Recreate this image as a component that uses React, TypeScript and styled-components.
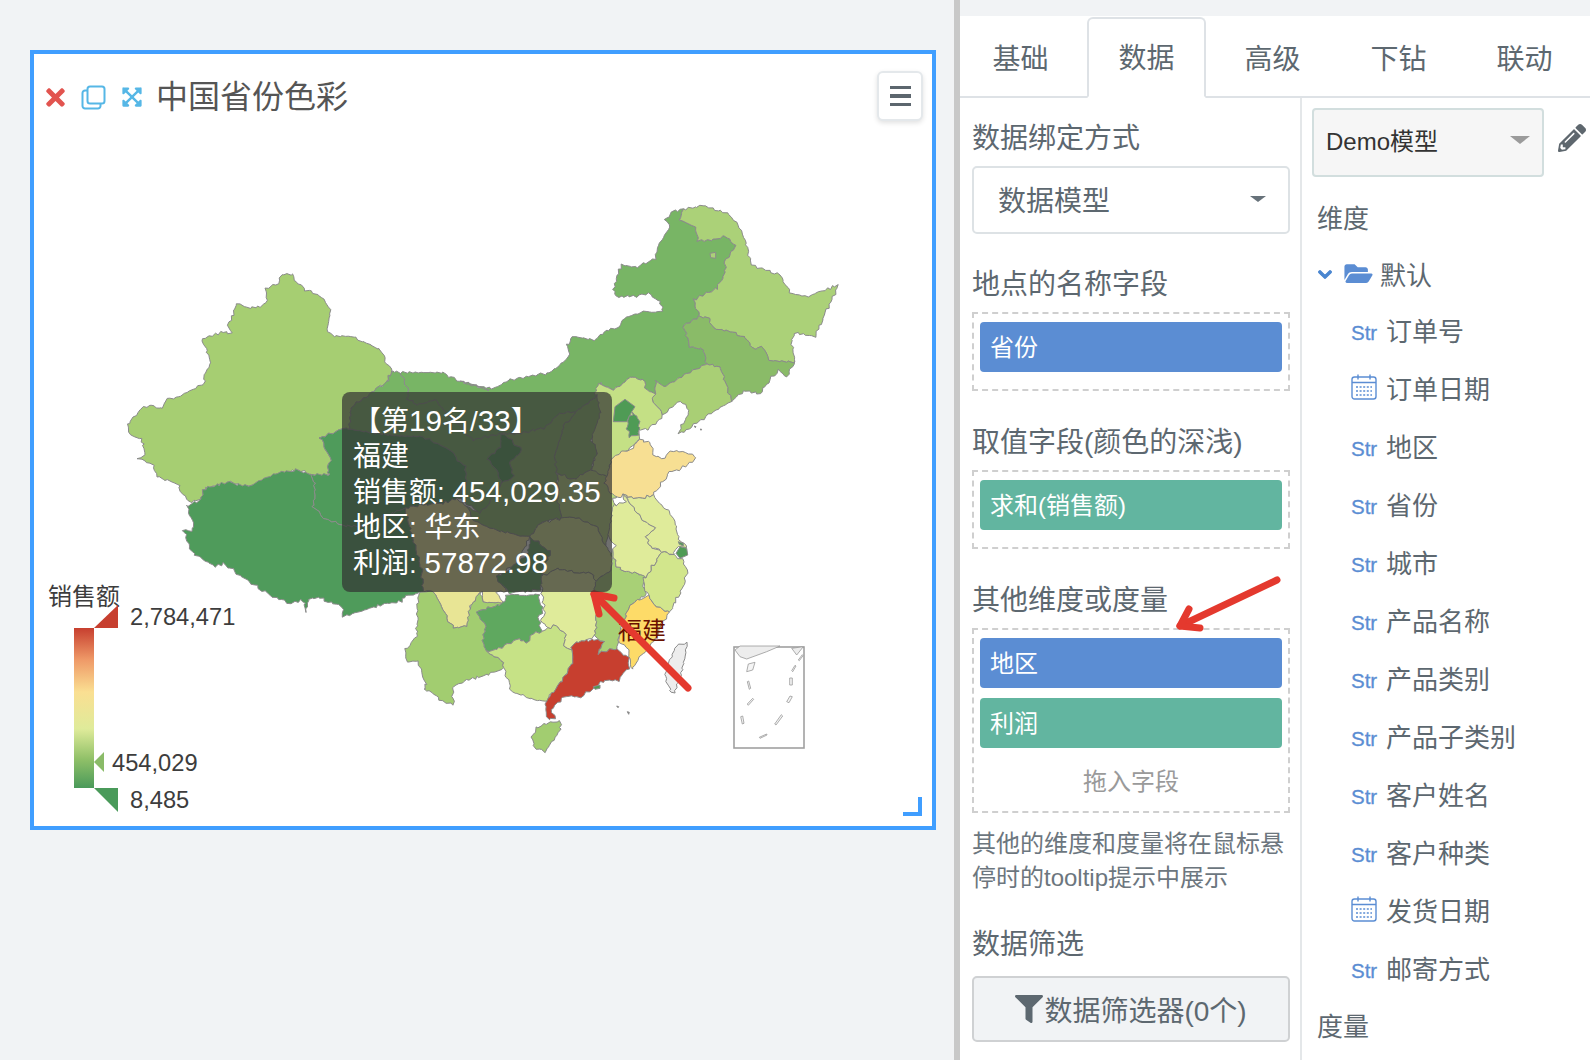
import React from "react";
import styled, { createGlobalStyle } from "styled-components";
import { FaChevronDown, FaExpandArrowsAlt, FaFilter, FaFolderOpen, FaPencilAlt, FaTimes } from "react-icons/fa";

const FONT = `"Liberation Sans", "Noto Sans CJK SC", sans-serif`;

const Global = createGlobalStyle`
  html, body { margin: 0; padding: 0; background: #f1f3f5; height: 1060px; overflow: hidden; }
  * { box-sizing: border-box; }
  body { font-family: ${FONT}; }
`;

const Page = styled.div`display: flex; width: 1590px; height: 1060px; background: #f1f3f5;`;
const LeftPane = styled.div`width: 960px; height: 1060px; padding: 50px 0 0 30px; border-right: 6px solid #c8c8c8;`;
const Card = styled.div`position: relative; display: flex; flex-direction: column; width: 906px; height: 780px; background: #fff; border: 4px solid #409eff;`;
const CardHeader = styled.div`display: flex; align-items: center; justify-content: space-between; height: 86px; padding: 0 9px 0 11px;`;
const TitleGroup = styled.div`display: flex; align-items: center;`;
const Title = styled.div`margin-left: 13px; font-size: 32px; color: #555; line-height: 44px;`;
const CloseIcon = styled(FaTimes)`width: 21px; height: 27px; color: #e2544f; margin-right: 15px;`;
const ExpandIcon = styled(FaExpandArrowsAlt)`width: 22px; height: 22px; color: #56b7e6; margin-left: 15px;`;
const CopySvg = styled.svg`width: 25px; height: 25px; display: block;`;
const MenuButton = styled.div`display: flex; flex-direction: column; justify-content: center; gap: 5px; align-items: center; width: 46px; height: 50px; margin-bottom: 2px; background: #fff; border: 2px solid #e4e8eb; border-radius: 6px; box-shadow: 0 2px 5px rgba(0,0,0,.12);`;
const MenuBar = styled.span`display: block; width: 21px; height: 3.5px; background: #5c666e;`;
const ChartArea = styled.div`position: relative; flex: 1;`;
const MapSvg = styled.svg`display: block; width: 898px; height: 686px;`;
const Tooltip = styled.div`position: absolute; left: 308px; top: 252px; width: 270px; height: 200px; padding: 11px 0 0 11px; background: rgba(50,50,50,.7); border-radius: 8px; color: #fff; font-size: 28px; line-height: 35.6px; white-space: nowrap;`;
const TipLine = styled.div`height: 35.6px;`;
const TipNumber = styled.span`font-size: 29.6px;`;
const ResizeCorner = styled.div`position: absolute; right: 10px; bottom: 10px; width: 19px; height: 19px; border-right: 4px solid #409eff; border-bottom: 4px solid #409eff;`;
const Province = styled.polygon`stroke: #8b8b8b; stroke-width: 1; stroke-linejoin: round;`;
const ChartText = styled.text`font-family: ${FONT}; font-size: 24px; fill: #3d3d3d;`;
const ValueText = styled(ChartText)`font-size: 23.7px;`;
const RegionLabel = styled(ChartText)`fill: #6a1100;`;
const ArrowLine = styled.polyline`fill: none; stroke: #e4392e; stroke-width: 7; stroke-linecap: round; stroke-linejoin: round;`;

const Panel = styled.div`position: relative; flex: 1; margin-top: 16px; background: #fff; height: 1044px; overflow: hidden;`;
const TabBar = styled.div`display: flex; gap: 7px; height: 82px; padding: 1px 0 0 1px; border-bottom: 2px solid #dee2e6;`;
const Tab = styled.div<{ $active?: boolean }>`
  width: 119px; height: 81px; flex: none; display: flex; align-items: center; justify-content: center; padding-bottom: 3px;
  font-size: 28px; color: #5d6870; background: ${p => (p.$active ? "#fff" : "transparent")};
  border: 2px solid ${p => (p.$active ? "#dee2e6" : "transparent")};
  border-bottom: ${p => (p.$active ? "2px solid #fff" : "none")};
  border-radius: 6px 6px 0 0;
`;
const Columns = styled.div`display: flex; height: 962px;`;
const ConfigCol = styled.div`width: 342px; padding: 20px 10px 0 12px; border-right: 2px solid #e4e7e9;`;
const FieldCol = styled.div`flex: 1; padding: 10px 0 0 10px;`;
const Label = styled.div<{ $gap?: number }>`height: 40px; line-height: 42px; font-size: 28px; color: #5d6870; margin-top: ${p => p.$gap ?? 0}px; white-space: nowrap;`;
const SelectBox = styled.div`display: flex; align-items: center; justify-content: space-between; height: 68px; margin-top: 8px; padding: 0 22px 3px 24px; border: 2px solid #dde2e5; border-radius: 5px; font-size: 28px; color: #5d6870;`;
const Caret = styled.span<{ $color?: string; $w?: number }>`width: 0; height: 0; border-left: ${p => p.$w ?? 8}px solid transparent; border-right: ${p => p.$w ?? 8}px solid transparent; border-top: ${p => (p.$w ?? 8) * 0.8}px solid ${p => p.$color ?? "#67727a"};`;
const DropZone = styled.div<{ $h: number }>`display: flex; flex-direction: column; gap: 10px; height: ${p => p.$h}px; margin-top: 8px; padding: 8px 6px 0; border: 2px dashed #cfcfcf;`;
const Chip = styled.div<{ $kind: "dim" | "mea" }>`display: flex; align-items: center; height: 50px; flex: none; padding: 0 0 3px 10px; border-radius: 4px; color: #fff; font-size: 24px; background: ${p => (p.$kind === "dim" ? "#5b8dd3" : "#62b5a0")};`;
const DropHint = styled.div`height: 30px; margin-top: 9px; line-height: 30px; text-align: center; font-size: 24px; color: #9a9a9a;`;
const Help = styled.div`margin-top: 14px; font-size: 24px; line-height: 34px; color: #6c767e; white-space: nowrap;`;
const FilterButton = styled.div`display: flex; align-items: center; justify-content: center; height: 66px; margin-top: 12px; background: #f1f3f5; border: 2px solid #cfd1d3; border-radius: 5px; color: #5d6870; font-size: 28px;`;
const FilterIcon = styled(FaFilter)`width: 28px; height: 28px; color: #5d6870; margin-right: 1px;`;
const ModelRow = styled.div`display: flex; align-items: center; gap: 14px;`;
const ModelSelect = styled.div`display: flex; align-items: center; justify-content: space-between; width: 232px; height: 69px; padding: 0 12px 6px 12px; background: #f6f6f6; border: 2px solid #d2dede; border-radius: 4px; font-size: 24px; color: #333;`;
const PencilIcon = styled(FaPencilAlt)`width: 28px; height: 28px; margin-bottom: 10px; color: #5e676e;`;
const SideLabel = styled.div<{ $gap: number }>`height: 40px; line-height: 42px; padding-left: 5px; font-size: 26px; color: #5d6870; margin-top: ${p => p.$gap}px;`;
const GroupRow = styled.div`display: flex; align-items: center; height: 54px; margin-top: 8px; padding-left: 4px; font-size: 26px; color: #5d6870;`;
const Chevron = styled(FaChevronDown)`width: 18px; height: 15px; color: #4a86d0; margin-right: 10px; margin-top: 2px; stroke: #4a86d0; stroke-width: 40px;`;
const Folder = styled(FaFolderOpen)`width: 29px; height: 25px; color: #5b8dd3; margin-right: 7px; margin-top: 1px;`;
const FieldRow = styled.div`display: flex; align-items: center; height: 58px; padding-left: 39px; font-size: 26px; color: #5d6870;`;
const TypeTag = styled.span`width: 35px; flex: none; padding-top: 7px; font-size: 20.5px; color: #5b8dd3; -webkit-text-stroke: 0.3px #5b8dd3;`;
const CalSvg = styled.svg`width: 26px; height: 26px; margin-right: 9px; flex: none;`;
const PanelArrow = styled.svg`position: absolute; left: 0; top: 0; width: 630px; height: 700px; pointer-events: none;`;

const Z1: [number, number] = [100, 190];
const Z2: [number, number] = [450, 190];
const Z3: [number, number] = [300, 480];
const Z9: [number, number] = [310, 370];
const Z10: [number, number] = [180, 450];
const Z11: [number, number] = [590, 440];
const seg = (o: [number, number], s: string) =>
  s.trim().split(/\s+/).map(p => {
    const [x, y] = p.split(",").map(Number);
    return `${(o[0] + x / 3).toFixed(1)},${(o[1] + y / 3).toFixed(1)}`;
  }).join(" ");

/* Coast and border wiggle: a continuous displacement field, so neighbouring provinces keep a shared edge. */
const wobble = (pts: string) => {
  const p = pts.trim().split(/\s+/).map(s => s.split(",").map(Number));
  const xs = p.map(a => a[0]);
  const ys = p.map(a => a[1]);
  if (Math.max(...xs) - Math.min(...xs) < 25 && Math.max(...ys) - Math.min(...ys) < 25) return pts;
  const out: string[] = [];
  p.forEach((a, i) => {
    const b = p[(i + 1) % p.length];
    const n = Math.max(1, Math.round(Math.hypot(b[0] - a[0], b[1] - a[1]) / 3));
    for (let k = 0; k < n; k++) {
      const x = a[0] + ((b[0] - a[0]) * k) / n;
      const y = a[1] + ((b[1] - a[1]) * k) / n;
      const dx = 0.9 * Math.sin(0.9 * x + 1.3 * y) + 0.6 * Math.sin(2.3 * x - 1.7 * y + 1);
      const dy = 0.9 * Math.cos(1.1 * x - 0.8 * y + 2) + 0.6 * Math.sin(1.9 * x + 2.1 * y);
      out.push(`${(x + dx).toFixed(1)},${(y + dy).toFixed(1)}`);
    }
  });
  return out.join(" ");
};

const provinces: { fill: string; pts: string }[] = [
  { fill: "#a6ce72", pts: [seg(Z1, "545,255 578,252 582,270 610,295 665,320 690,360 680,420 700,438 760,442 800,460 840,478 875,545 862,575 820,600 785,630 755,650 745,720 660,745 695,810 680,830 690,855 640,855 595,840 520,855 490,880 430,890 395,875 320,895"), seg(Z10, "75,115 60,150 25,155 0,125"), seg(Z1, "240,885 170,860 160,825 115,805 135,795 125,745 95,740 82,705 125,655 155,645 185,658 200,628 230,625 300,585 315,575 315,545 333,525 320,480 305,447 370,425 395,432 385,405 412,340 440,352 475,352 500,340 498,295 535,280")].join(" ") },
  { fill: "#78b565", pts: [seg(Z1, "900,545 1030,550 1070,570 1170,600"), seg(Z2, "30,575 100,590 125,598 175,570 300,548 350,510 360,490 348,465 370,440 440,450 460,425 510,410 520,385 580,365 640,365 630,335 595,310 550,320 500,318 488,298 515,225 565,230 615,205 620,175 660,110 645,90 665,65 700,58 690,90 735,110 745,150 790,150 825,137 855,170 825,215 825,250 800,295 730,330 750,380 700,405 720,470 760,480 770,520 640,590 620,570 615,610 590,600 580,570 545,560 490,600 450,580 445,600"), seg(Z9, "855,80 800,125 750,130 700,175 630,190 575,190 490,210 420,140 375,90 321,105 291,84 294,60 270,6")].join(" ") },
  { fill: "#78b565", pts: seg(Z9, "246,6 270,6 294,60 291,84 321,105 375,90 420,140 490,210 575,190 610,215 570,230 530,265 560,300 575,340 545,390 510,430 470,400 440,380 470,340 465,290 420,240 340,200 250,195 100,175 30,205 115,180 125,110 156,90 189,60 231,37") },
  { fill: "#4f9b5b", pts: [seg(Z10, "395,75 450,75"), seg(Z1, "680,830 695,810 660,745"), seg(Z9, "30,205 100,175 250,195 340,200 420,240 465,290 470,340 440,385 400,400 330,405 285,415 220,440 160,470"), seg(Z10, "490,225 440,210 400,170 405,110")].join(" ") },
  { fill: "#4f9b5b", pts: [seg(Z10, "395,75 405,110 400,170 440,210 490,225"), seg(Z9, "160,470 220,440 285,415 310,510 335,600 340,665"), seg(Z10, "715,430 670,440 665,455 620,460 570,475 490,500 485,470 420,445 385,445 378,485 370,450 330,460 280,440 245,420 215,400 185,380 130,340 105,350 40,310 25,280 10,240 35,245 40,220 20,170 60,150 75,115 110,105 150,95 170,105 215,105 285,70 350,60")].join(" ") },
  { fill: "#abd178", pts: seg(Z2, "700,58 760,47 830,70 860,95 885,150 905,225 990,255 1020,310 1075,318 1165,285 1150,320 1130,360 1095,440 1035,430 1025,455 1035,515 960,510 935,470 910,480 880,440 840,425 790,415 775,385 750,380 730,330 800,295 825,250 825,215 855,170 825,137 790,150 745,150 735,110 690,90") },
  { fill: "#abd178", pts: seg(Z2, "780,190 797,187 797,205 782,203") },
  { fill: "#8abb68", pts: seg(Z2, "750,380 775,385 790,415 840,425 880,440 910,480 935,470 960,510 1035,515 1010,560 985,540 960,570 930,610 880,600 845,635 810,530 770,520 760,480 720,470 700,405") },
  { fill: "#a9cf75", pts: seg(Z2, "640,590 770,520 810,530 845,635 780,670 700,725 685,730 720,660 690,635 640,675 605,630 615,610 620,570") },
  { fill: "#c4e085", pts: seg(Z2, "445,580 490,600 545,560 580,570 590,600 615,610 605,630 640,675 595,720 565,720 570,750 520,790 480,825 492,862 420,850 440,790 425,740 445,660 435,610") },
  { fill: "#4f9b55", pts: seg(Z2, "525,628 555,650 545,665 530,695 490,695 495,650") },
  { fill: "#4f9b55", pts: seg(Z2, "550,665 570,690 565,735 540,740 530,710 535,690") },
  { fill: "#8abb68", pts: seg(Z9, "800,125 860,75 870,125 845,210 860,245 842,300 790,330 740,310 735,260 760,165") },
  { fill: "#8abb68", pts: seg(Z9, "630,190 700,175 750,130 800,125 760,165 735,260 740,310 745,395 755,445 720,450 690,460 660,500 620,495 540,475 490,450 470,410 510,430 545,390 575,340 610,320 600,280 635,240 610,215 575,190") },
  { fill: "#4f9b55", pts: seg(Z9, "575,190 610,215 635,240 600,280 610,320 575,340 560,300 530,265 570,230") },
  { fill: "#b9d87c", pts: seg(Z9, "745,310 790,330 842,300 905,325 925,375 910,385 920,420 905,450 885,525 860,470 790,440 755,445 745,395") },
  { fill: "#d2e58c", pts: seg(Z9, "660,500 690,460 755,445 790,440 860,470 885,525 910,560 920,590 855,635 845,610 800,610 740,595 695,620 720,545") },
  { fill: "#e8e595", pts: [seg(Z9, "285,415 330,405 400,400 440,385 470,410 490,450 540,475 620,495 660,500 620,580 555,620 590,665"), seg(Z3, "590,335 615,370 550,365 545,335 510,380 500,440 460,445 400,335"), seg(Z9, "340,665 335,600 310,510")].join(" ") },
  { fill: "#a2cd70", pts: seg(Z3, "355,335 400,335 460,445 500,440 510,385 540,335 550,365 610,370 530,395 555,440 550,490 560,515 610,545 610,565 575,580 540,590 500,600 458,620 460,675 420,660 405,640 370,630 380,610 370,590 355,545 320,545 315,510 350,470 352,420") },
  { fill: "#5fa85f", pts: seg(Z3, "610,370 620,345 715,345 730,400 715,410 725,455 700,460 680,490 655,475 600,505 560,515 550,490 555,440 530,395") },
  { fill: "#5fa85f", pts: seg(Z9, "660,500 720,545 695,620 690,660 600,668 555,620 600,600 655,550") },
  { fill: "#c6e286", pts: seg(Z3, "560,515 600,505 655,475 680,490 700,460 725,455 745,445 770,435 795,465 790,500 815,510 820,540 800,580 765,630 740,660 720,665 680,650 635,635 625,600 610,565 610,545") },
  { fill: "#dfeb9a", pts: [seg(Z9, "695,620 740,595 800,610 845,610 860,630 850,665"), seg(Z3, "890,400 885,470 860,480 820,490 815,510 790,500 795,465 770,435 745,445 725,420 735,410 730,370 725,335")].join(" ") },
  { fill: "#a8d076", pts: [seg(Z9, "850,665 860,630 905,600"), seg(Z11, "66,330 80,380 110,395 135,400 165,410 160,440 170,465 125,490 110,520 85,590 80,625"), seg(Z3, "950,505 895,520 910,485 885,470 890,400")].join(" ") },
  { fill: "#fddb68", pts: seg(Z11, "178,465 190,490 215,510 240,515 215,550 200,590 170,630 150,650 125,690 115,630 85,600 110,520 125,490 170,470") },
  { fill: "#c73f2f", pts: seg(Z3, "820,490 860,480 885,480 910,485 895,520 950,505 985,535 985,565 955,600 900,605 880,625 840,650 790,650 755,690 765,715 745,718 735,680 745,655 765,630 800,580 820,540 815,510") },
  { fill: "#a2cd70", pts: seg(Z3, "740,730 780,725 782,750 760,780 735,815 700,800 697,770 710,745") },
  { fill: "#ededed", pts: seg(Z3, "1130,495 1160,490 1160,520 1145,570 1125,640 1115,640 1095,590 1110,540") },
  { fill: "#4f9b55", pts: seg(Z3, "880,620 900,615 900,625 885,628") },
  { fill: "#f7df93", pts: seg(Z11, "66,60 95,35 120,30 150,0 180,10 195,50 225,55 235,35 270,35 315,45 310,65 265,90 240,95 215,130 190,165 155,175 130,175 100,165 90,175 60,160 45,130 55,100") },
  { fill: "#dfeb9a", pts: seg(Z11, "100,165 125,200 160,240 195,265 170,290 180,320 215,335 170,410 135,400 110,395 80,380 66,330 75,320 55,290 66,200 105,185") },
  { fill: "#dfeb9a", pts: seg(Z11, "100,165 130,175 155,175 190,165 215,195 240,215 260,260 265,300 285,310 290,325 262,320 250,345 180,320 170,290 195,265 160,240 125,200") },
  { fill: "#d2e68c", pts: seg(Z11, "215,335 250,345 258,352 275,358 295,395 285,415 285,430 240,515 215,510 190,490 178,465 165,450 160,415 170,410") },
  { fill: "#4f9b55", pts: seg(Z11, "258,340 270,320 290,325 293,345 270,355") },
  { fill: "#4f9b55", pts: seg(Z11, "265,305 280,310 280,318 268,313") },
  { fill: "#888", pts: seg(Z3, "950,678 956,680 954,683") },
  { fill: "#888", pts: seg(Z3, "982,695 988,697 986,703") },
  { fill: "#888", pts: seg(Z2, "733,708 738,710 736,713") },
  { fill: "#888", pts: seg(Z2, "751,717 755,718 753,721") },
];

const insetShapes = [
  { f: "#ededed", p: "1305,510 1320,498 1440,498 1400,515 1340,537 1320,530" },
  { f: "#ededed", p: "1475,505 1510,500 1490,525" },
  { f: "#f5f5f5", p: "1340,575 1345,552 1365,547 1358,570" },
  { f: "#f5f5f5", p: "1342,605 1346,603 1352,625 1348,628" },
  { f: "#f5f5f5", p: "1342,672 1358,655 1361,658 1345,676" },
  { f: "#f5f5f5", p: "1322,710 1328,708 1332,730 1327,732" },
  { f: "#f5f5f5", p: "1378,772 1400,762 1401,765 1380,775" },
  { f: "#f5f5f5", p: "1424,732 1444,704 1448,708 1428,735" },
  { f: "#f5f5f5", p: "1460,665 1470,648 1477,650 1467,668" },
  { f: "#f5f5f5", p: "1469,594 1477,594 1477,615 1469,615" },
  { f: "#f5f5f5", p: "1475,572 1485,556 1488,558 1478,575" },
  { f: "#f5f5f5", p: "1495,540 1507,524 1509,527 1498,542" },
];

const fields: { t: "s" | "d"; n: string }[] = [
  { t: "s", n: "订单号" }, { t: "d", n: "订单日期" }, { t: "s", n: "地区" }, { t: "s", n: "省份" },
  { t: "s", n: "城市" }, { t: "s", n: "产品名称" }, { t: "s", n: "产品类别" }, { t: "s", n: "产品子类别" },
  { t: "s", n: "客户姓名" }, { t: "s", n: "客户种类" }, { t: "d", n: "发货日期" }, { t: "s", n: "邮寄方式" },
];

const CalendarIcon = () => (
  <CalSvg viewBox="0 0 26 26" fill="none" stroke="#5b8dd3" strokeWidth="1.4">
    <rect x="1" y="3" width="24" height="22" rx="2.5" />
    <path d="M1 8.5h24M7 0.5v5M19 0.5v5" />
    <path d="M5 13h16M5 17h16M5 21h16" strokeDasharray="2 1.6" />
  </CalSvg>
);

export default function App() {
  return (
    <Page>
      <Global />
      <LeftPane>
        <Card>
          <CardHeader>
            <TitleGroup>
              <CloseIcon />
              <CopySvg viewBox="0 0 25 25" fill="none" stroke="#56b7e6" strokeWidth="2">
                <rect x="6.5" y="1.5" width="17" height="17" rx="2.5" />
                <path d="M6.5 5.5H4A2.5 2.5 0 0 0 1.500 8v13A2.500 2.500 0 0 0 4 23.500h13a2.500 2.500 0 0 0 2.500-2.500v-2.500" />
              </CopySvg>
              <ExpandIcon />
              <Title>中国省份色彩</Title>
            </TitleGroup>
            <MenuButton>
              <MenuBar />
              <MenuBar />
              <MenuBar />
            </MenuButton>
          </CardHeader>
          <ChartArea>
            <MapSvg viewBox="34 140 898 686">
              <defs>
                <linearGradient id="legendRamp" x1="0" y1="0" x2="0" y2="1">
                  <stop offset="0" stopColor="#c73f2f" />
                  <stop offset="0.2" stopColor="#ef9a68" />
                  <stop offset="0.4" stopColor="#fadf92" />
                  <stop offset="0.63" stopColor="#dfeb9a" />
                  <stop offset="0.82" stopColor="#90c068" />
                  <stop offset="1" stopColor="#4a9a5a" />
                </linearGradient>
              </defs>
              {provinces.map((p, i) => (
                <Province key={i} fill={p.fill} points={wobble(p.pts)} />
              ))}
              <rect x="734" y="647" width="70" height="101" fill="none" stroke="#a0a0a0" strokeWidth="1.6" />
              {insetShapes.map((s, i) => (
                <polygon key={i} points={seg(Z3, s.p)} fill={s.f} stroke="#999" strokeWidth="0.8" />
              ))}
              <RegionLabel x="618" y="639">福建</RegionLabel>
              <ChartText x="48" y="605">销售额</ChartText>
              <rect x="74" y="628" width="20" height="160" fill="url(#legendRamp)" />
              <polygon points="94,628 118,605 118,628" fill="#c73f2f" />
              <polygon points="94,762 104,752 104,772" fill="#8abb68" />
              <polygon points="94,788 118,788 118,812" fill="#4a9a5a" />
              <ValueText x="130" y="625">2,784,471</ValueText>
              <ValueText x="112" y="771">454,029</ValueText>
              <ValueText x="130" y="808">8,485</ValueText>
              <ArrowLine points="688,688 594,594" />
              <ArrowLine points="614,598 594,594 599,614" />
            </MapSvg>
            <Tooltip>
              <TipLine>【第<TipNumber>19</TipNumber>名/<TipNumber>33</TipNumber>】</TipLine>
              <TipLine>福建</TipLine>
              <TipLine>销售额: <TipNumber>454,029.35</TipNumber></TipLine>
              <TipLine>地区: 华东</TipLine>
              <TipLine>利润: <TipNumber>57872.98</TipNumber></TipLine>
            </Tooltip>
            <ResizeCorner />
          </ChartArea>
        </Card>
      </LeftPane>
      <Panel>
        <TabBar>
          <Tab>基础</Tab>
          <Tab $active>数据</Tab>
          <Tab>高级</Tab>
          <Tab>下钻</Tab>
          <Tab>联动</Tab>
        </TabBar>
        <Columns>
          <ConfigCol>
            <Label>数据绑定方式</Label>
            <SelectBox>
              数据模型
              <Caret />
            </SelectBox>
            <Label $gap={30}>地点的名称字段</Label>
            <DropZone $h={79}>
              <Chip $kind="dim">省份</Chip>
            </DropZone>
            <Label $gap={31}>取值字段(颜色的深浅)</Label>
            <DropZone $h={79}>
              <Chip $kind="mea">求和(销售额)</Chip>
            </DropZone>
            <Label $gap={31}>其他维度或度量</Label>
            <DropZone $h={185}>
              <Chip $kind="dim">地区</Chip>
              <Chip $kind="mea">利润</Chip>
              <DropHint>拖入字段</DropHint>
            </DropZone>
            <Help>
              其他的维度和度量将在鼠标悬
              <br />
              停时的tooltip提示中展示
            </Help>
            <Label $gap={29}>数据筛选</Label>
            <FilterButton>
              <FilterIcon />
              数据筛选器(0个)
            </FilterButton>
          </ConfigCol>
          <FieldCol>
            <ModelRow>
              <ModelSelect>
                Demo模型
                <Caret $color="#9b9b9b" $w={10} />
              </ModelSelect>
              <PencilIcon />
            </ModelRow>
            <SideLabel $gap={21}>维度</SideLabel>
            <GroupRow>
              <Chevron />
              <Folder />
              默认
            </GroupRow>
            {fields.map(f => (
              <FieldRow key={f.n}>
                {f.t === "s" ? <TypeTag>Str</TypeTag> : <CalendarIcon />}
                {f.n}
              </FieldRow>
            ))}
            <SideLabel $gap={10}>度量</SideLabel>
          </FieldCol>
        </Columns>
        <PanelArrow viewBox="960 16 630 700">
          <ArrowLine points="1277,580 1180,626" />
          <ArrowLine points="1189,609 1180,626 1200,628" />
        </PanelArrow>
      </Panel>
    </Page>
  );
}
